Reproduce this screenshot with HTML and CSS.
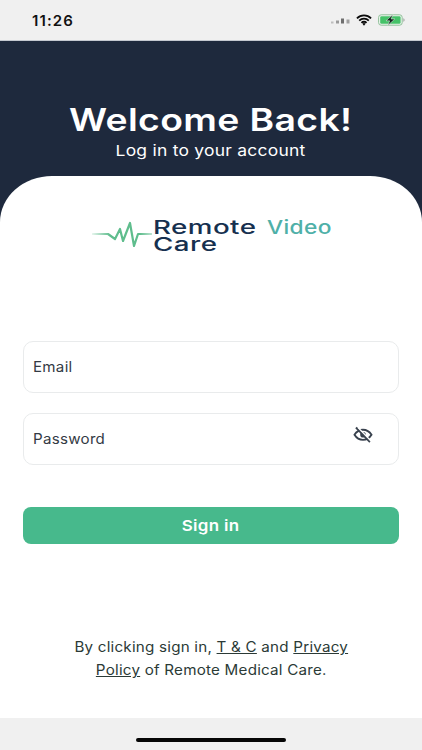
FILE: index.html
```html
<!DOCTYPE html>
<html lang="en">
<head>
<meta charset="utf-8">
<title>Remote Video Care</title>
<link rel="stylesheet" href="styles.css">
</head>
<body>
<div class="screen">
  <div class="status">
    <span class="time">11:26</span>
    <div class="status-icons">
      <svg width="19" height="7" viewBox="0 0 19 7"><rect x="0" y="4.5" width="2.5" height="2" fill="#bdbdbd"/><rect x="5" y="3.5" width="3" height="3" fill="#9a9a9a"/><rect x="10" y="1.5" width="3" height="5" fill="#6f6f6f"/><rect x="15.5" y="2.5" width="3" height="4" fill="#a0a0a0"/></svg>
      <svg width="16" height="12" viewBox="0 0 17 12"><path d="M1 4.200a10.600 10.600 0 0 1 15 0M3.400 6.700a7.200 7.200 0 0 1 10.200 0M5.800 9a3.800 3.800 0 0 1 5.400 0" fill="none" stroke="#0c0c0c" stroke-width="1.900"/><path d="M8.500 12l-1.700-2a2.400 2.400 0 0 1 3.400 0z" fill="#0c0c0c"/></svg>
      <svg width="27" height="12" viewBox="0 0 27 12"><rect x=".6" y=".8" width="23.600" height="10.400" rx="2.600" fill="#eef5ef" stroke="#8fbf98" stroke-width="1"/><rect x="2.200" y="2.300" width="20.400" height="7.400" rx="1.300" fill="#45c268"/><path d="M25.400 4.300v3.400c.8-.3 1.200-1 1.200-1.700s-.4-1.400-1.200-1.700z" fill="#a0a0a0"/><path d="M15 .6 8 6.800h3.700L9.800 11.400l7-6.400h-3.700z" fill="#10201a" stroke="#eef5ef" stroke-width=".5"/></svg>
    </div>
  </div>
  <div class="hero">
    <h1 class="hero-title">Welcome Back!</h1>
    <p class="hero-sub">Log in to your account</p>
  </div>
  <main class="card">
    <div class="logo">
      <svg width="60" height="26" viewBox="0 0 60 26"><defs><linearGradient id="pulseFade" x1="0" x2="1" y1="0" y2="0"><stop offset="0" stop-color="#5fbd8d" stop-opacity=".15"/><stop offset=".3" stop-color="#5fbd8d"/><stop offset=".8" stop-color="#5fbd8d"/><stop offset="1" stop-color="#5fbd8d" stop-opacity=".4"/></linearGradient></defs><path d="M0 13H16L23 18 28 8 31 20 38 2 42 25 46 13H60" fill="none" stroke="url(#pulseFade)" stroke-width="2.200" stroke-linejoin="round"/></svg>
      <div class="logo-text">
        <div class="logo-line">Remote <span class="logo-accent">Video</span></div>
        <div class="logo-line">Care</div>
      </div>
    </div>
    <form class="form">
      <div class="field"><span class="field-label">Email</span></div>
      <div class="field">
        <span class="field-label">Password</span>
        <svg class="eye" width="20" height="18" viewBox="0 0 20 18"><path d="M1.500 8.800C3.600 5.400 6.400 3.700 10 3.700s6.400 1.700 8.500 5.100c-2.100 3.400-4.900 5.100-8.500 5.100S3.600 12.200 1.500 8.800z" fill="none" stroke="#39424e" stroke-width="1.900"/><circle cx="10" cy="8.800" r="2.800" fill="#39424e"/><path d="M3 1.500 17 16" stroke="#39424e" stroke-width="2"/><path d="M5 1.500 19 16" stroke="#fff" stroke-width="1.200"/></svg>
      </div>
      <div class="submit"><span class="submit-text">Sign in</span></div>
    </form>
    <p class="terms">By clicking sign in, <a class="terms-link">T &amp; C</a> and <a class="terms-link">Privacy</a><br><a class="terms-link">Policy</a> of Remote Medical Care.</p>
  </main>
  <div class="home-bar"><span class="home-indicator"></span></div>
</div>
</body>
</html>
```
FILE: styles.css
```css
* { box-sizing: border-box; }
html, body { margin: 0; padding: 0; }
body { font-family: Inter, "Liberation Sans", sans-serif; background: #fff; }
.screen { width: 422px; height: 750px; display: flex; flex-direction: column; background: #1e293d; overflow: hidden; }
.status { height: 41px; flex: none; background: #f0f0f0; border-bottom: 1px solid #c4c8d0; display: flex; align-items: center; justify-content: space-between; padding: 0 17px 0 32px; }
.time { font-size: 15px; font-weight: 600; letter-spacing: 1.1px; color: #111; }
.status-icons { display: flex; align-items: center; gap: 6px; }
.hero { height: 135px; flex: none; display: flex; flex-direction: column; align-items: center; color: #fff; padding-top: 59px; }
.hero-title { margin: 0; font-size: 31px; line-height: 40px; font-weight: 600; letter-spacing: .3px; transform: scaleX(1.205); }
.hero-sub { margin: 1px 0 0; font-size: 15px; line-height: 20px; letter-spacing: .2px; transform: scaleX(1.165); }
.card { flex: 1; background: #fff; border-radius: 52px 52px 0 0 / 46px 46px 0 0; padding: 40px 23px 0 22.5px; display: flex; flex-direction: column; }
.logo { display: flex; align-items: center; gap: 1px; height: 36px; padding-left: 69.5px; }
.logo-text { display: flex; flex-direction: column; margin-top: 3px; transform: scaleX(1.5); transform-origin: left center; }
.logo-line { font-size: 18.5px; line-height: 17px; font-weight: 500; letter-spacing: .3px; color: #16304f; white-space: nowrap; }
.logo-accent { display: inline-block; margin-left: 2px; color: #4fb0a8; transform: scaleX(.82); transform-origin: left center; }
.form { display: flex; flex-direction: column; margin-top: 89px; }
.field { height: 52px; margin-bottom: 20px; border: 1px solid #e9ebec; border-radius: 10px; display: flex; align-items: center; justify-content: space-between; padding: 0 25px 0 9px; }
.field-label { font-size: 14px; color: #333a44; letter-spacing: .25px; margin-bottom: 2px; transform: scaleX(1.08); transform-origin: left center; }
.eye { margin-bottom: 8px; }
.submit { height: 37px; margin-top: 22px; background: #47b98c; border-radius: 8px; color: #fff; font-size: 15px; font-weight: 600; letter-spacing: .3px; display: flex; align-items: center; justify-content: center; }
.submit-text { transform: scaleX(1.13); }
.terms { margin: 91px 0 0; text-align: center; font-size: 14px; line-height: 23px; letter-spacing: .2px; color: #2b3a36; transform: scaleX(1.085); }
.terms-link { text-decoration: underline; }
.home-bar { height: 32px; flex: none; background: #f0f0f0; display: flex; justify-content: center; padding-top: 20px; }
.home-indicator { width: 150px; height: 4px; border-radius: 2px; background: #060606; }
```
